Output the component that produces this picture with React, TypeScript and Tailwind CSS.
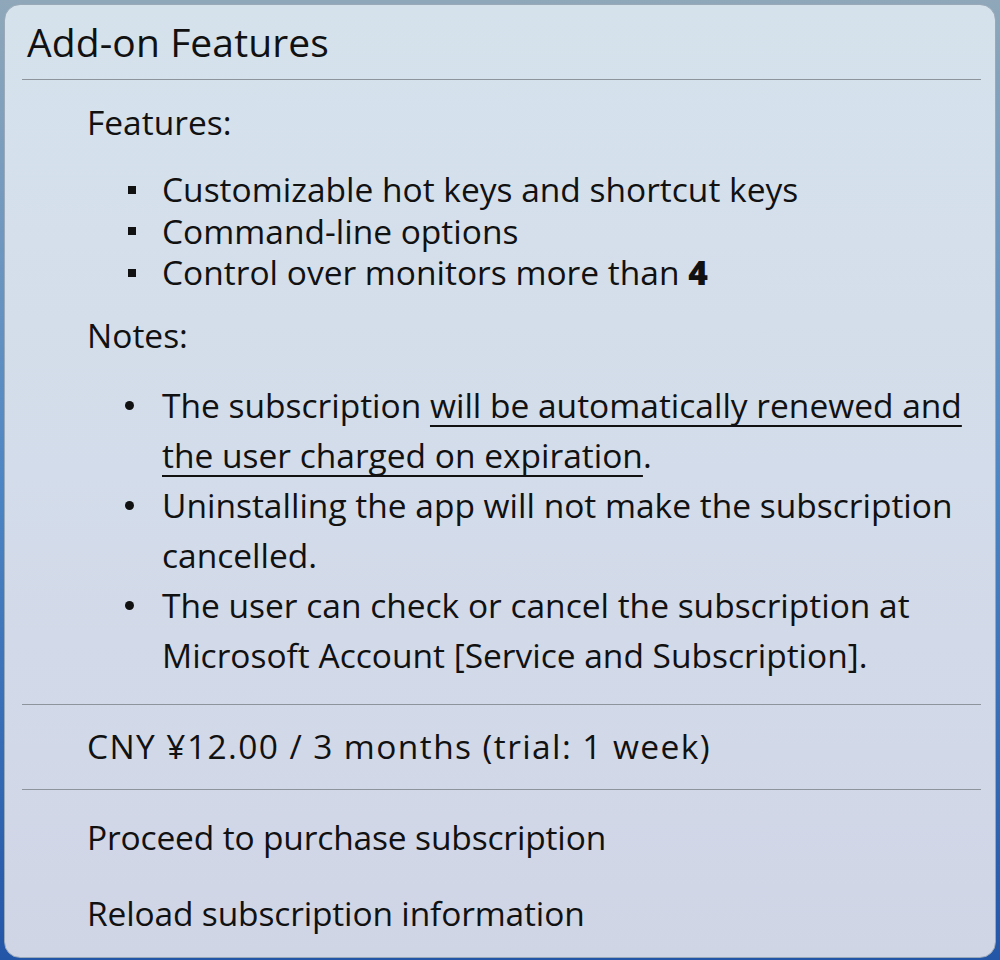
import React from "react";

const font = { fontFamily: '"Open Sans", "Noto Sans", sans-serif' };

const Divider = () => <div className="h-px bg-[#8d949b] ml-[17px] mr-[14px]" />;

const Dot = () => (
  <span className="w-[75px] flex justify-end pr-[28px] pt-[21px] shrink-0">
    <span className="w-[9px] h-[9px] rounded-full bg-[#111]" />
  </span>
);

export default function App() {
  return (
    <div className="w-[1000px] h-[960px] bg-gradient-to-b from-[#8fa7b9] via-[#4d86c4] to-[#2456a8] p-[4px]" style={font}>
      <div className="h-[954px] rounded-[16px] border border-[#9aa9b8] bg-gradient-to-b from-[#d5e2ec] via-[#d3dcea] to-[#d0d5e6] text-[#111] flex flex-col overflow-hidden">
        {/* Title */}
        <div className="h-[74px] flex items-center pl-[22px] text-[39px] tracking-[0.1px]">Add-on Features</div>
        <Divider />

        {/* Body */}
        <div className="pl-[82px] pr-[10px] pt-[21px] pb-[24px] text-[33.5px]">
          <div className="leading-[42px]">Features:</div>
          <ul className="mt-[26px] leading-[41.5px]">
            {[
              <>Customizable hot keys and shortcut keys</>,
              <>Command-line options</>,
              <>
                Control over monitors more than <b className="font-extrabold">4</b>
              </>,
            ].map((t, i) => (
              <li key={i} className="flex items-center">
                <span className="w-[75px] flex justify-end pr-[26px] shrink-0">
                  <span className="w-[8px] h-[8px] bg-[#111]" />
                </span>
                <span>{t}</span>
              </li>
            ))}
          </ul>
          <div className="mt-[20px] leading-[42px]">Notes:</div>
          <ul className="mt-[24px] leading-[50px]">
            <li className="flex">
              <Dot />
              <span className="whitespace-nowrap">
                The subscription{" "}
                <span className="underline decoration-2 underline-offset-[7px] [text-decoration-skip-ink:none]">
                  will be automatically renewed and
                  <br />
                  the user charged on expiration
                </span>
                .
              </span>
            </li>
            <li className="flex">
              <Dot />
              <span className="whitespace-nowrap">
                Uninstalling the app will not make the subscription
                <br />
                cancelled.
              </span>
            </li>
            <li className="flex">
              <Dot />
              <span className="whitespace-nowrap">
                The user can check or cancel the subscription at
                <br />
                Microsoft Account [Service and Subscription].
              </span>
            </li>
          </ul>
        </div>
        <Divider />

        {/* Price */}
        <div className="h-[84px] flex items-center pl-[82px] text-[33.5px] tracking-[1.4px]">CNY ¥12.00 / 3 months (trial: 1 week)</div>
        <Divider />

        {/* Actions */}
        <div className="pt-[10px] text-[33.5px]">
          <div className="h-[76px] flex items-center pl-[82px] tracking-[-0.15px]">Proceed to purchase subscription</div>
          <div className="h-[76px] flex items-center pl-[82px] tracking-[-0.15px]">Reload subscription information</div>
        </div>
      </div>
    </div>
  );
}
